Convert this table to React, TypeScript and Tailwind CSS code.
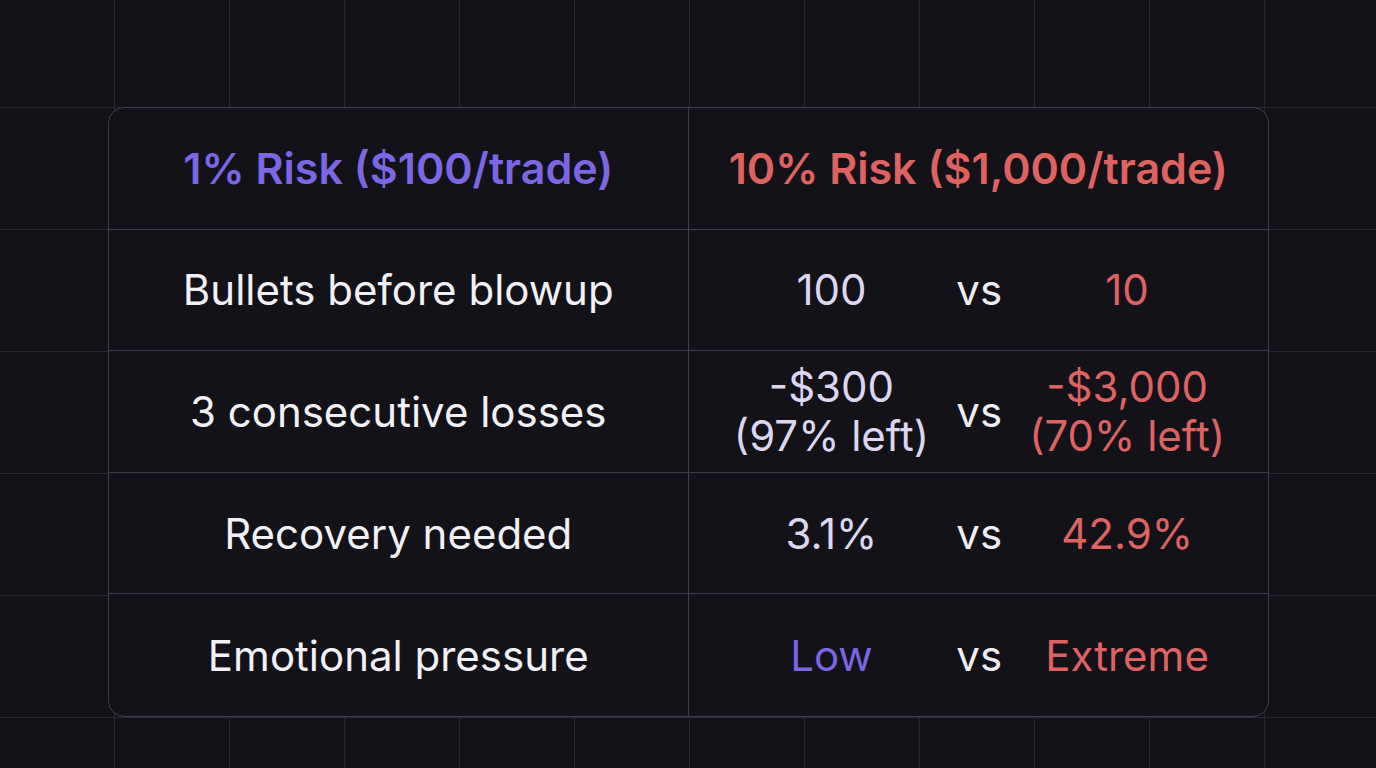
import React from 'react';

type Row = {
  label: string;
  low: React.ReactNode;
  high: React.ReactNode;
  lowClass?: string;
};

const rows: Row[] = [
  { label: 'Bullets before blowup', low: '100', high: '10' },
  {
    label: '3 consecutive losses',
    low: (
      <>
        -$300
        <br />
        (97% left)
      </>
    ),
    high: (
      <>
        -$3,000
        <br />
        (70% left)
      </>
    ),
  },
  { label: 'Recovery needed', low: '3.1%', high: '42.9%' },
  { label: 'Emotional pressure', low: 'Low', high: 'Extreme', lowClass: 'text-[#7b66e3]' },
];

export default function App() {
  return (
    <div
      className="w-[1376px] h-[768px] flex items-start bg-[#131219] bg-[linear-gradient(to_right,#272631_1px,transparent_1px),linear-gradient(to_bottom,#272631_1px,transparent_1px)] bg-[size:115px_122px] bg-[position:114px_107px] pt-[107px] pl-[108px]"
      style={{ fontFamily: 'Inter, "Noto Sans", sans-serif' }}
    >
      <div className="w-[1161px] h-[610px] grid grid-rows-5 rounded-[16px] border border-[#3e3d4c] bg-[#131219] overflow-hidden">
        {/* header */}
        <div className="grid grid-cols-2 border-b border-[#3e3d4c]">
          <div className="flex items-center justify-center border-r border-[#3e3d4c] text-[43px] font-semibold text-[#7b66e3] whitespace-nowrap">
            1% Risk ($100/trade)
          </div>
          <div className="flex items-center justify-center text-[43px] font-semibold text-[#de6260] whitespace-nowrap">
            10% Risk ($1,000/trade)
          </div>
        </div>
        {rows.map((r, i) => (
          <div
            key={r.label}
            className={`grid grid-cols-2 min-h-0 ${i < rows.length - 1 ? 'border-b border-[#3e3d4c]' : ''}`}
          >
            <div className="flex items-center justify-center border-r border-[#3e3d4c] text-[42px] text-[#f1f0f5] whitespace-nowrap">
              {r.label}
            </div>
            <div className="grid grid-cols-3 items-center pl-[69px] pr-[67px] text-[42px] leading-[49px] text-center whitespace-nowrap">
              <div className={`flex justify-center ${r.lowClass ?? 'text-[#dcd6f0]'}`}>
                <span>{r.low}</span>
              </div>
              <div className="text-[#eeedf3]">vs</div>
              <div className="flex justify-center text-[#de6260]">
                <span>{r.high}</span>
              </div>
            </div>
          </div>
        ))}
      </div>
    </div>
  );
}
